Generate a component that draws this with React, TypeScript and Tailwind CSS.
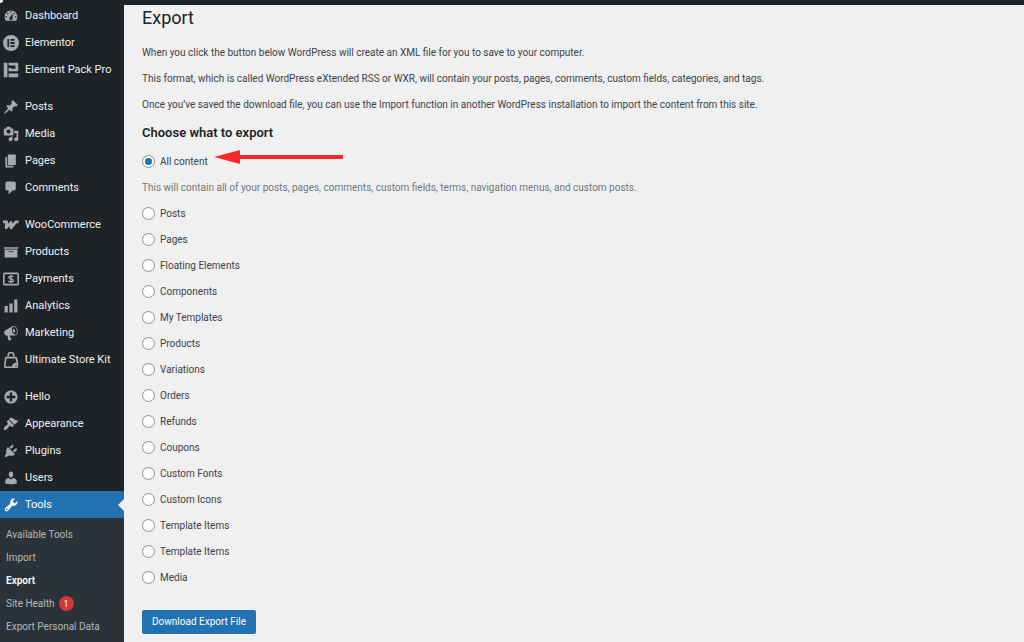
import { useState } from "react";
import type { ReactNode } from "react";

type MenuItem = { label: string; icon: ReactNode };

const menuGroups: MenuItem[][] = [
  [
    {
      label: "Dashboard",
      icon: (
        <path
          fillRule="evenodd"
          d="M3.76 16h12.48c1.1-1.37 1.76-3.11 1.76-5 0-4.42-3.58-8-8-8s-8 3.58-8 8c0 1.89.66 3.63 1.76 5zM10 4c.55 0 1 .45 1 1s-.45 1-1 1-1-.45-1-1 .45-1 1-1zM6 6c.55 0 1 .45 1 1s-.45 1-1 1-1-.45-1-1 .45-1 1-1zm8 0c.55 0 1 .45 1 1s-.45 1-1 1-1-.45-1-1 .45-1 1-1zm-5.37 5.55L12 7v6c0 1.1-.9 2-2 2s-2-.9-2-2c0-.57.24-1.08.63-1.45zM4 10c.55 0 1 .45 1 1s-.45 1-1 1-1-.45-1-1 .45-1 1-1zm12 0c.55 0 1 .45 1 1s-.45 1-1 1-1-.45-1-1 .45-1 1-1z"
        />
      ),
    },
    {
      label: "Elementor",
      icon: (
        <path
          fillRule="evenodd"
          d="M10 0a10 10 0 1 0 0 20 10 10 0 0 0 0-20zM5.500 5h2.200v10H5.500zM9.300 5H14.500v2.200H9.300zM9.300 8.900H14.500v2.200H9.300zM9.300 12.800H14.500V15H9.300z"
        />
      ),
    },
    {
      label: "Element Pack Pro",
      icon: <path d="M1 1h4.500v18H1zM7 1h12v10.500H10.500v-3H15.500V4.500H7zM7 7.500h3.500v4H7zM7 14.500h12V19H7z" />,
    },
  ],
  [
    {
      label: "Posts",
      icon: (
        <path d="M10.440 3.020l1.820-1.820 6.360 6.350-1.830 1.820c-1.050-.68-2.480-.57-3.410.36l-.75.75c-.92.93-1.040 2.350-.35 3.410l-1.830 1.820-2.410-2.410-2.800 2.790c-.42.42-3.380 2.710-3.800 2.290s1.860-3.390 2.280-3.810l2.790-2.790L4.100 9.360l1.830-1.820c1.050.69 2.480.57 3.400-.36l.75-.75c.93-.92 1.050-2.350.36-3.410z" />
      ),
    },
    {
      label: "Media",
      icon: (
        <path
          fillRule="evenodd"
          d="M13 11V4c0-.55-.45-1-1-1h-1.670L9 1H5L3.670 3H2c-.55 0-1 .45-1 1v7c0 .55.45 1 1 1h10c.55 0 1-.45 1-1zM7 4.500c1.380 0 2.500 1.120 2.500 2.500S8.380 9.500 7 9.500 4.500 8.380 4.500 7 5.620 4.500 7 4.500zM14 6h5v10.500c0 1.380-1.120 2.500-2.500 2.500S14 17.880 14 16.500s1.120-2.500 2.500-2.500c.17 0 .34.02.5.05V9h-3V6zm-4 8.050V13h2v3.500c0 1.380-1.120 2.500-2.500 2.500S7 17.880 7 16.500 8.120 14 9.500 14c.17 0 .34.02.5.05z"
        />
      ),
    },
    { label: "Pages", icon: <path d="M6 15V2h10v13H6zm-1 1h8v2H3V5h2v11z" /> },
    {
      label: "Comments",
      icon: <path d="M5 2h9c1.100 0 2 .9 2 2v7c0 1.100-.9 2-2 2h-2l-5 5v-5H5c-1.100 0-2-.9-2-2V4c0-1.100.9-2 2-2z" />,
    },
  ],
  [
    {
      label: "WooCommerce",
      icon: (
        <path
          d="M0 6h4.500L4 13.500 10 7v6.500L16 6h3.500"
          fill="none"
          stroke="currentColor"
          strokeWidth="3.500"
          strokeLinejoin="round"
        />
      ),
    },
    { label: "Products", icon: <path fillRule="evenodd" d="M19 4v2H1V4h18zM2 7h16v10H2V7zm11 3V9H7v1h6z" /> },
    {
      label: "Payments",
      icon: (
        <g fill="none" stroke="currentColor">
          <rect x="1" y="3" width="18" height="14" rx="1" strokeWidth="2" />
          <path d="M13 7.500c-.6-.9-1.600-1.200-3-1.200-1.700 0-2.800.6-2.800 1.800 0 2.600 5.800 1.100 5.800 3.800 0 1.200-1.200 1.800-3 1.800-1.500 0-2.600-.4-3.200-1.300M10 4.800v10.400" strokeWidth="1.600" />
        </g>
      ),
    },
    { label: "Analytics", icon: <path d="M18 18V2h-4v16h4zm-6 0V7H8v11h4zm-6 0v-8H2v8h4z" /> },
    {
      label: "Marketing",
      icon: (
        <path
          fillRule="evenodd"
          d="M18.150 5.940c.46 1.620.38 3.220-.02 4.480-.42 1.280-1.260 2.180-2.300 2.480-.16.06-.26.06-.4.06-.06.02-.12.02-.18.02-.06.02-.14.02-.22.02h-6.800l2.220 5.500c.02.14-.06.26-.14.34-.08.1-.24.16-.34.16H6.950c-.1 0-.26-.06-.34-.16-.08-.08-.16-.2-.14-.34l-1-5.500H4.250l-.02-.02c-.5.06-1.080-.18-1.540-.62s-.88-1.080-1.060-1.880c-.24-.8-.2-1.560-.02-2.200.18-.62.58-1.080 1.060-1.300l.02-.02 9-5.400c.1-.06.18-.1.24-.16.06-.04.14-.08.24-.12.16-.08.28-.12.5-.18 1.040-.3 2.240.1 3.220.98s1.840 2.240 2.260 3.860zm-2.580 5.980h-.02c.4-.1.74-.34 1.040-.7.58-.7.86-1.760.86-3.040 0-.64-.1-1.300-.28-1.980-.34-1.360-1.020-2.500-1.780-3.240s-1.680-1.100-2.460-.88c-.82.22-1.400.96-1.700 2-.32 1.040-.28 2.360.06 3.720.38 1.360 1 2.500 1.800 3.240.78.74 1.620 1.100 2.480.88zm-2.540-7.080c.22-.04.42-.02.62.04.38.16.76.48 1.020 1s.42 1.200.42 1.780c0 .3-.04.56-.12.8-.18.48-.44.84-.86.94-.34.1-.8-.06-1.140-.4s-.64-.86-.78-1.500c-.18-.62-.12-1.240.02-1.720s.48-.84.82-.94z"
        />
      ),
    },
    {
      label: "Ultimate Store Kit",
      icon: (
        <g fill="none" stroke="currentColor" strokeWidth="2" strokeLinejoin="round" strokeLinecap="round">
          <path d="M12 19H3.500Q2 19 2.200 17.500L3.500 7h13l1.500 7-6 5q0-5 6-5v4q0 1-1 1h-5" />
          <path d="M6.500 5V4q0-3.500 3.500-3.500T13.500 4v1" />
        </g>
      ),
    },
  ],
  [
    {
      label: "Hello",
      icon: (
        <path
          fillRule="evenodd"
          d="M15.800 4.200c3.200 3.210 3.200 8.390 0 11.600-3.210 3.200-8.390 3.200-11.600 0C1 12.590 1 7.410 4.200 4.200 7.410 1 12.590 1 15.800 4.200zm-4.300 11.300v-4h4v-3h-4v-4h-3v4h-4v3h4v4h3z"
        />
      ),
    },
    {
      label: "Appearance",
      icon: (
        <path d="M14.480 11.060L7.410 3.990l1.500-1.500c.5-.56 2.300-.47 3.510.32 1.210.8 1.430 1.280 2.910 2.100 1.180.64 2.450 1.260 4.450.85zm-.71.71L6.700 4.700 4.930 6.470c-.39.39-.39 1.020 0 1.410l1.060 1.060c.39.39.39 1.030 0 1.420-.6.6-1.430 1.110-2.210 1.690-.35.26-.7.53-1.010.84C1.430 14.230.4 16.080 1.400 17.070c.99 1 2.840-.03 4.180-1.360.31-.31.58-.66.85-1.020.57-.78 1.080-1.610 1.690-2.210.39-.39 1.020-.39 1.410 0l1.060 1.060c.39.39 1.020.39 1.410 0z" />
      ),
    },
    {
      label: "Plugins",
      icon: (
        <path d="M13.110 4.360L9.870 7.600 8 5.730l3.240-3.240c.35-.34 1.050-.2 1.560.32.52.51.66 1.210.31 1.550zm-8 1.770l.91-1.120 9.010 9.010-1.190.84c-.71.71-2.630 1.160-3.820 1.160H6.140L4.900 17.260c-.59.59-1.540.59-2.120 0-.59-.58-.59-1.530 0-2.120l1.240-1.240v-3.880c0-1.130.4-3.190 1.090-3.890zm7.260 3.970l3.240-3.240c.34-.35 1.040-.21 1.550.31.52.51.66 1.210.31 1.550l-3.240 3.250z" />
      ),
    },
    {
      label: "Users",
      icon: (
        <path d="M10 9.250c-2.270 0-2.730-3.440-2.730-3.440C7 4.020 7.820 2 9.970 2c2.160 0 2.980 2.020 2.710 3.810 0 0-.41 3.440-2.680 3.440zm0 2.570L12.720 10c2.390 0 4.520 2.330 4.520 4.530v2.490s-3.650 1.130-7.240 1.130c-3.650 0-7.240-1.130-7.240-1.130v-2.490c0-2.250 1.940-4.480 4.470-4.480z" />
      ),
    },
    {
      label: "Tools",
      icon: (
        <path
          fillRule="evenodd"
          d="M16.680 9.770c-1.340 1.340-3.300 1.670-4.950.99l-5.410 6.520c-.99.99-2.590.99-3.580 0s-.99-2.590 0-3.570l6.520-5.420c-.68-1.650-.35-3.610.99-4.950 1.280-1.280 3.120-1.620 4.720-1.060l-2.890 2.890 2.820 2.820 2.860-2.870c.53 1.580.18 3.390-1.080 4.650zM3.810 16.210c.4.39 1.040.39 1.430 0 .4-.4.4-1.040 0-1.430-.39-.4-1.030-.4-1.430 0-.39.39-.39 1.030 0 1.430z"
        />
      ),
    },
  ],
];

const toolLinks = ["Available Tools", "Import", "Export", "Site Health", "Export Personal Data"];

const exportTypes = [
  "Posts",
  "Pages",
  "Floating Elements",
  "Components",
  "My Templates",
  "Products",
  "Variations",
  "Orders",
  "Refunds",
  "Coupons",
  "Custom Fonts",
  "Custom Icons",
  "Template Items",
  "Template Items",
  "Media",
];

function SidebarItem({ label, icon }: MenuItem) {
  const active = label === "Tools";
  return (
    <li>
      <a
        href="#"
        className={`relative flex items-center h-[27px] pl-[3px] gap-1.5 text-[11px] leading-4 whitespace-nowrap ${
          active ? "bg-[#2271b1] text-white" : "text-[#f0f0f1]"
        }`}
      >
        <svg viewBox="0 0 20 20" fill="currentColor" className={`size-4 shrink-0 ${active ? "text-white" : "text-[#a7aaad]"}`}>
          {icon}
        </svg>
        {label}
        {active && (
          <svg viewBox="0 0 6 12" fill="#f0f0f0" className="absolute right-0 top-2 w-1.5 h-3">
            <path d="M6 0v12L0 6z" />
          </svg>
        )}
      </a>
    </li>
  );
}

function Sidebar() {
  return (
    <nav className="w-[124px] shrink-0 bg-[#1d2327]">
      <div className="flex flex-col gap-2.5">
        {menuGroups.map((group, i) => (
          <ul key={i}>
            {group.map((item) => (
              <SidebarItem key={item.label} {...item} />
            ))}
          </ul>
        ))}
      </div>
      <ul className="bg-[#2c3338] pt-[5px] pb-2 text-[10px]">
        {toolLinks.map((label) => (
          <li key={label}>
            <a
              href="#"
              className={`flex items-center h-[23px] pl-1.5 gap-1 whitespace-nowrap ${
                label === "Export" ? "font-semibold text-white" : "text-[#b4b8bc]"
              }`}
            >
              {label}
              {label === "Site Health" && (
                <span className="flex items-center justify-center size-[15px] rounded-full bg-[#d63638] text-[9px] text-white">1</span>
              )}
            </a>
          </li>
        ))}
      </ul>
    </nav>
  );
}

type RadioProps = { id: string; label: string; checked: boolean; onSelect: () => void };

function RadioRow({ id, label, checked, onSelect }: RadioProps) {
  return (
    <div className="flex items-start gap-[5px] h-4">
      <input
        id={id}
        type="radio"
        name="content"
        checked={checked}
        onChange={onSelect}
        className="appearance-none grid place-content-center mt-px size-[13px] rounded-full border border-[#8c8f94] bg-white before:size-[7px] before:rounded-full checked:before:bg-[#2271b1]"
      />
      <label htmlFor={id}>{label}</label>
    </div>
  );
}

export default function App() {
  const [selected, setSelected] = useState("all");

  return (
    <div className="relative flex flex-col min-h-screen bg-[#f0f0f0] font-['Roboto',sans-serif] text-[10px] leading-4 text-[#3c434a]">
      <div className="absolute left-0 top-0 size-[3px] rounded-br-full bg-white" />
      <header className="h-[5px] bg-[#1d2327]" />
      <div className="flex flex-1">
        <div className="flex bg-[#1d2327] -mt-[3px]">
          <Sidebar />
        </div>
        <main className="flex-1 pl-[18px] pr-4">
          <h1 className="text-[18px] leading-[26px] text-[#1d2327]">Export</h1>
          <div className="flex flex-col gap-2.5 mt-3.5">
            <p>When you click the button below WordPress will create an XML file for you to save to your computer.</p>
            <p>
              This format, which is called WordPress eXtended RSS or WXR, will contain your posts, pages, comments, custom
              fields, categories, and tags.
            </p>
            <p>
              Once you’ve saved the download file, you can use the Import function in another WordPress installation to
              import the content from this site.
            </p>
          </div>
          <h2 className="mt-2.5 text-[13px] leading-5 font-semibold text-[#1d2327]">Choose what to export</h2>
          <form onSubmit={(e) => e.preventDefault()} className="mt-[11px]">
            <div className="flex flex-col gap-2.5">
              <div className="flex items-center gap-1.5">
                <RadioRow id="all" label="All content" checked={selected === "all"} onSelect={() => setSelected("all")} />
                <svg viewBox="0 0 130 16" fill="#fa2a2a" className="w-[130px] h-4 -mt-2.5">
                  <path d="M0 8L26 1v5h103v4H26v5z" />
                </svg>
              </div>
              <p className="text-[#72777c]">
                This will contain all of your posts, pages, comments, custom fields, terms, navigation menus, and custom
                posts.
              </p>
              {exportTypes.map((label, i) => (
                <RadioRow
                  key={i}
                  id={`type-${i}`}
                  label={label}
                  checked={selected === `type-${i}`}
                  onSelect={() => setSelected(`type-${i}`)}
                />
              ))}
            </div>
            <button type="submit" className="mt-6 h-6 px-2.5 rounded-xs bg-[#2271b1] text-white">
              Download Export File
            </button>
          </form>
        </main>
      </div>
    </div>
  );
}
